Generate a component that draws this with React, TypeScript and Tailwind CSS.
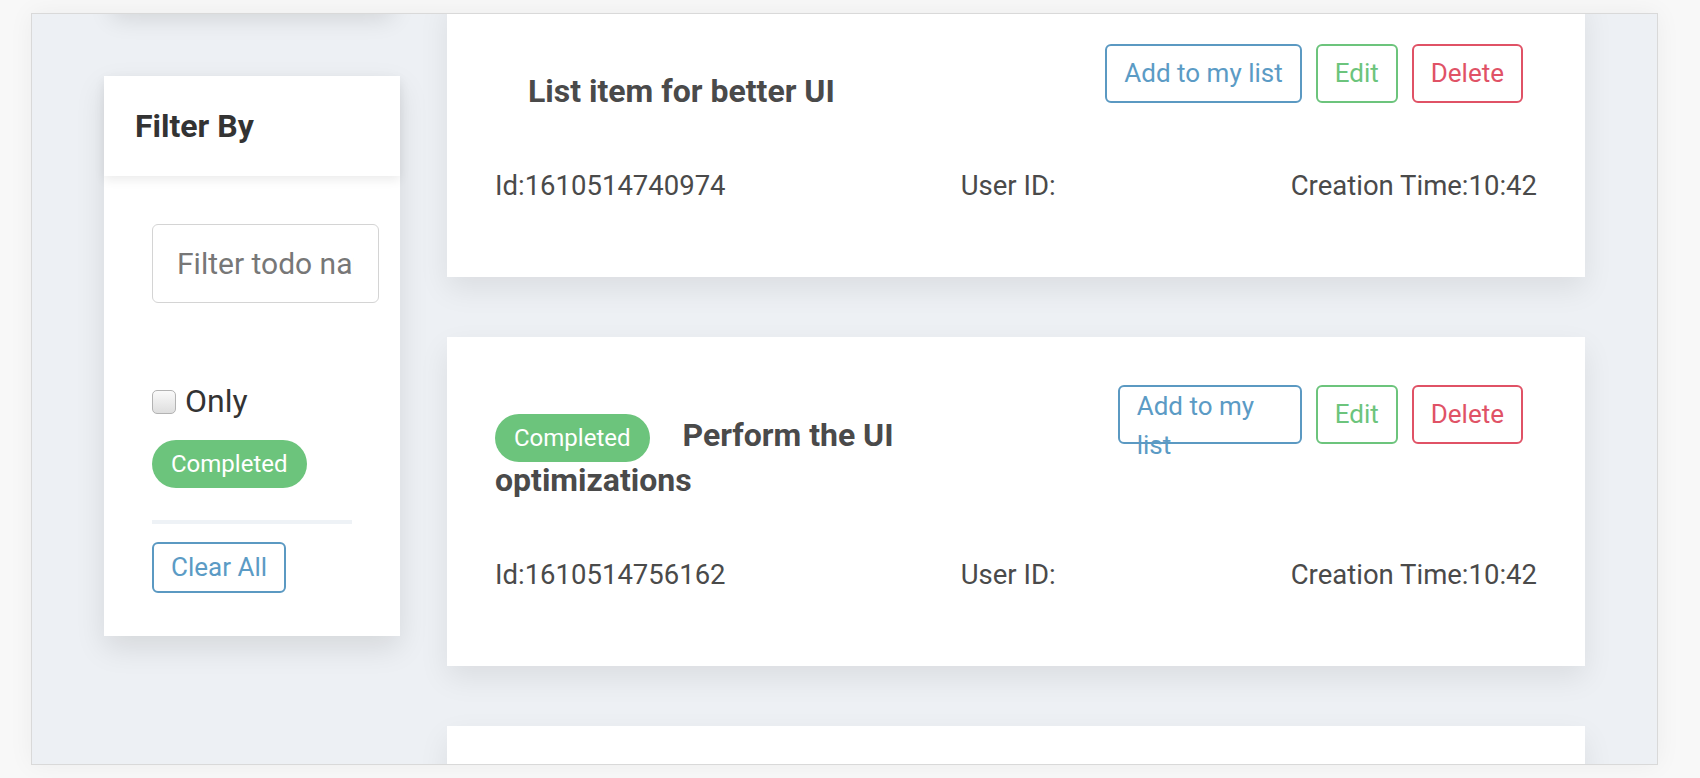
import React from "react";

type Todo = {
  id: string;
  title: string;
  completed: boolean;
  narrowAdd?: boolean;
};

const todos: Todo[] = [
  { id: "1610514740974", title: "List item for better UI", completed: false },
  { id: "1610514756162", title: "Perform the UI optimizations", completed: true, narrowAdd: true },
];

function Badge() {
  return (
    <span className="inline-block rounded-full bg-[#6cc47c] px-[19px] py-[6px] text-[24px] font-normal leading-[36px] text-white">
      Completed
    </span>
  );
}

function TodoCard({ todo }: { todo: Todo }) {
  return (
    <div className="bg-white px-[48px] pt-[48px] pb-[71px] shadow-[0_12px_28px_rgba(0,0,0,0.08)]">
      <div className="flex items-start justify-between">
        <h5
          className={`max-w-[430px] text-[32px] font-bold leading-[45px] text-[#4a4a4a] ${
            todo.completed ? "mt-[28px]" : "mt-[25px]"
          }`}
        >
          {todo.completed ? (
            <span className="-my-[6px] mr-[33px] inline-block">
              <Badge />
            </span>
          ) : (
            <span className="mr-[33px] inline-block" />
          )}
          {todo.title}
        </h5>
        <div className="flex shrink-0">
          <button
            className={`mr-[14px] h-[59px] rounded-[6px] border-2 border-[#5b99c2] px-[17px] text-[26px] leading-[39px] text-[#5b9bc5] ${
              todo.narrowAdd ? "w-[184px] text-left" : ""
            }`}
          >
            Add to my list
          </button>
          <button className="mr-[14px] h-[59px] rounded-[6px] border-2 border-[#6cc47c] px-[17px] text-[26px] leading-[39px] text-[#6cc47c]">
            Edit
          </button>
          <button className="mr-[14px] h-[59px] rounded-[6px] border-2 border-[#e05266] px-[17px] text-[26px] leading-[39px] text-[#e05266]">
            Delete
          </button>
        </div>
      </div>
      <div className="mt-[51px] flex justify-between text-[27.5px] leading-[41px] text-[#4a4a4a]">
        <span>Id:{todo.id}</span>
        <span>User ID:</span>
        <span>Creation Time:10:42</span>
      </div>
    </div>
  );
}

function FilterPanel() {
  return (
    <aside className="mt-[64px] w-[296px] bg-white shadow-[0_12px_28px_rgba(0,0,0,0.1)]">
      <div className="relative z-10 flex h-[100px] items-center bg-white px-[31px] shadow-[0_4px_10px_rgba(0,0,0,0.08)]">
        <h4 className="text-[32px] font-bold text-[#333333]">Filter By</h4>
      </div>
      <div className="px-[48px] pt-[48px] pb-[43px]">
        <input
          placeholder="Filter todo name"
          className="h-[79px] w-[227px] rounded-[6px] border border-[#d4d4d4] px-[24px] text-[30px] text-[#4a4a4a] outline-none placeholder:text-[#777777]"
        />
        <label className="mt-[76px] flex items-center gap-[9px] text-[32px] leading-[45px] text-[#333333]">
          <input
            type="checkbox"
            className="h-[24px] w-[24px] appearance-none rounded-[5px] border border-[#b3b3b3] bg-gradient-to-b from-[#fafafa] to-[#dedede]"
          />
          Only
        </label>
        <div className="mt-[16px]">
          <Badge />
        </div>
        <div className="mt-[32px] h-[4px] bg-[#eef2f6]" />
        <button className="mt-[18px] h-[51px] rounded-[6px] border-2 border-[#5b99c2] px-[17px] text-[26px] leading-[39px] text-[#5b9bc5]">
          Clear All
        </button>
      </div>
    </aside>
  );
}

export default function App() {
  return (
    <div className="min-h-screen bg-[#f8f8f8] pt-[13px] pl-[31px] font-['Roboto',sans-serif]">
      <div className="h-[752px] w-[1627px] overflow-hidden border border-[#d9d9d9] bg-[#edf0f4] shadow-[0_0_24px_rgba(0,0,0,0.05)]">
        <div className="flex items-start gap-[47px] px-[72px]">
          {/* Filter column */}
          <div className="flex w-[296px] flex-col">
            <div className="-mt-[42px] mx-[8px] h-[40px] bg-white shadow-[0_6px_24px_rgba(0,0,0,0.12)]" />
            <FilterPanel />
          </div>

          {/* Todo list */}
          <div className="-mt-[18px] flex flex-1 flex-col gap-[60px]">
            {todos.map((todo) => (
              <TodoCard key={todo.id} todo={todo} />
            ))}
            {/* next card, scrolled below the fold */}
            <div className="h-[330px] bg-white shadow-[0_12px_28px_rgba(0,0,0,0.08)]" />
          </div>
        </div>
      </div>
    </div>
  );
}
